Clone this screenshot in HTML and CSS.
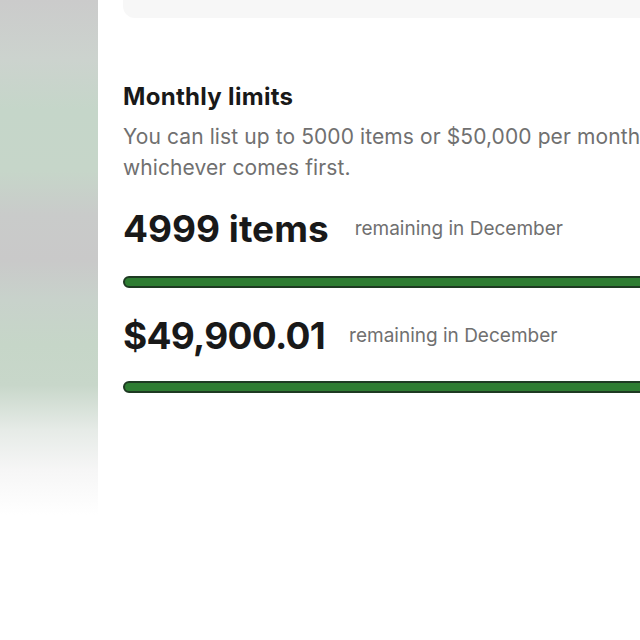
FILE: index.html
```html
<!DOCTYPE html>
<html>
<head>
<meta charset="utf-8">
<link rel="stylesheet" href="styles.css">
</head>
<body>
<div class="page">
  <aside class="side"></aside>
  <main class="main">
    <div class="card"></div>
    <section class="limits">
      <h2 class="title">Monthly limits</h2>
      <p class="desc">You can list up to 5000 items or $50,000 per month,<br>whichever comes first.</p>
      <div class="stat">
        <span class="big">4999 items</span>
        <span class="note">remaining in December</span>
      </div>
      <div class="bar bar1"><div class="fill" style="width:99.98%"></div></div>
      <div class="stat stat2">
        <span class="big big-money">$49,900.01</span>
        <span class="note">remaining in December</span>
      </div>
      <div class="bar bar2"><div class="fill" style="width:99.8%"></div></div>
    </section>
  </main>
</div>
</body>
</html>
```

FILE: styles.css
```css
html, body {
  margin: 0;
  padding: 0;
  background: #fff;
}
body {
  font-family: Inter, "Open Sans", sans-serif;
  width: 640px;
  height: 640px;
  overflow: hidden;
}
.page {
  display: flex;
  height: 640px;
}
.side {
  flex: 0 0 98px;
  background: linear-gradient(to bottom,
    #cbcbcb 0px,
    #ccd3ce 60px,
    #c5d6c9 110px,
    #c6d6c9 170px,
    #c9cbca 215px,
    #c9c9c9 260px,
    #c8d2cb 300px,
    #c6d6c8 345px,
    #c8d7ca 385px,
    #e6ebe7 430px,
    #f6f6f6 470px,
    #ffffff 515px);
}
.main {
  flex: 1;
  padding-left: 25px;
  overflow: hidden;
}
.card {
  width: 600px;
  height: 18px;
  background: #f7f7f7;
  border-radius: 0 0 0 12px;
}
.limits {
  width: 620px;
  padding-top: 65px;
}
.title {
  margin: 0;
  font-size: 24px;
  line-height: 28px;
  font-weight: 700;
  letter-spacing: 0.3px;
  color: #191919;
}
.desc {
  margin: 10px 0 0;
  font-size: 21px;
  line-height: 31px;
  letter-spacing: 0.1px;
  color: #707070;
  white-space: nowrap;
}
.stat {
  display: flex;
  align-items: center;
  gap: 26px;
  margin-top: 23px;
  height: 44px;
}
.stat2 {
  margin-top: 25px;
  gap: 24px;
}
.big {
  font-size: 37px;
  font-weight: 700;
  color: #191919;
}
.big-money {
  letter-spacing: -0.7px;
}
.note {
  font-size: 19px;
  color: #707070;
}
.bar {
  margin-top: 26px;
  height: 12px;
  width: 620px;
  border-radius: 6px;
  background: #1f3d22;
  box-sizing: border-box;
  border: 2px solid #1e3a22;
}
.bar2 {
  margin-top: 24px;
}
.fill {
  height: 100%;
  background: #2e7d32;
  border-radius: 4px;
}
```
